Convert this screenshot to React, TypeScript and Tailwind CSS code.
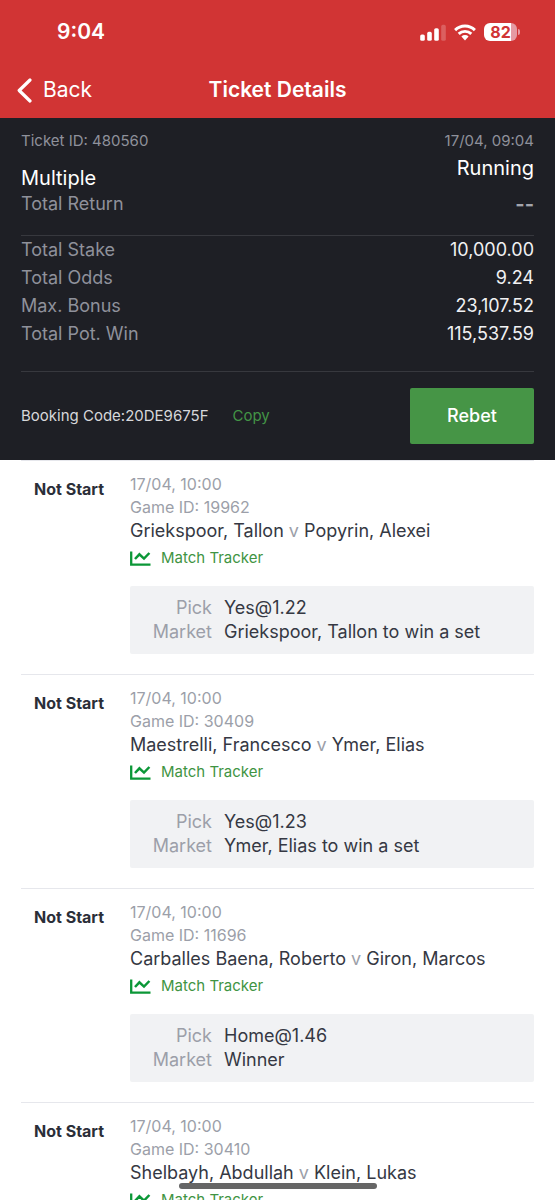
type Game = {
  time: string;
  id: string;
  home: string;
  away: string;
  pick: string;
  market: string;
};

const totals = [
  { label: "Total Stake", value: "10,000.00" },
  { label: "Total Odds", value: "9.24" },
  { label: "Max. Bonus", value: "23,107.52" },
  { label: "Total Pot. Win", value: "115,537.59" },
];

const games: Game[] = [
  { time: "17/04, 10:00", id: "19962", home: "Griekspoor, Tallon", away: "Popyrin, Alexei", pick: "Yes@1.22", market: "Griekspoor, Tallon to win a set" },
  { time: "17/04, 10:00", id: "30409", home: "Maestrelli, Francesco", away: "Ymer, Elias", pick: "Yes@1.23", market: "Ymer, Elias to win a set" },
  { time: "17/04, 10:00", id: "11696", home: "Carballes Baena, Roberto", away: "Giron, Marcos", pick: "Home@1.46", market: "Winner" },
  { time: "17/04, 10:00", id: "30410", home: "Shelbayh, Abdullah", away: "Klein, Lukas", pick: "Yes@1.25", market: "Klein, Lukas to win a set" },
];

function SignalIcon() {
  return (
    <svg width="26" height="17" viewBox="0 0 26 17" fill="#fff" aria-hidden="true">
      <rect x="0.2" y="10.5" width="4.6" height="6.3" rx="1.6" />
      <rect x="7.2" y="7.8" width="4.6" height="9" rx="1.6" />
      <rect x="14.2" y="4.2" width="4.6" height="12.6" rx="1.6" />
      <rect x="21.2" y="0.8" width="4.6" height="16" rx="1.6" opacity="0.22" />
    </svg>
  );
}

function WifiIcon() {
  return (
    <svg width="22" height="17" viewBox="0 0 22 17" aria-hidden="true">
      <g fill="none" stroke="#fff" strokeWidth="2.9">
        <path d="M1.1 6.1a14 14 0 0 1 19.8 0" />
        <path d="M4.7 9.9a9 9 0 0 1 12.6 0" />
      </g>
      <path d="M7.4 12.6a5.1 5.1 0 0 1 7.2 0L11 16.4z" fill="#fff" />
    </svg>
  );
}

function Battery() {
  return (
    <div className="flex items-center gap-px">
      <div className="flex h-[18px] w-[33px] items-center justify-center rounded-md bg-linear-to-r from-white from-82% to-[#e59aa3] to-82% text-[16px] leading-none font-bold text-[#d03434]">
        82
      </div>
      <div className="h-[6px] w-[2px] rounded-r-full bg-[#e59aa3]" />
    </div>
  );
}

function TrackerIcon() {
  return (
    <svg width="21" height="15" viewBox="0 0 21 15" fill="none" stroke="#0b9737" aria-hidden="true">
      <path d="M1.2 0.5v13.2H20.5" strokeWidth="2.3" />
      <path d="M5 8L9.4 3.3L14 7.6L19.4 2" strokeWidth="2.5" />
    </svg>
  );
}

function GameItem({ game }: { game: Game }) {
  return (
    <li className="flex border-t border-[#e6e7ec] pt-3 pb-5">
      <div className="w-[109px] shrink-0 pt-[5px] pl-[13px] text-[16px] leading-[23px] font-bold text-[#2b2e38]">
        Not Start
      </div>
      <div className="min-w-0 flex-1">
        <div className="text-[16px] leading-[23px] text-[#9c9fa9]">{game.time}</div>
        <div className="text-[16px] leading-[23px] text-[#9c9fa9]">Game ID: {game.id}</div>
        <div className="text-[18px] leading-[24px] text-[#353843]">
          {game.home} <span className="text-[#9c9fa9]">v</span> {game.away}
        </div>
        <a href="#tracker" className="mt-[3px] flex w-fit items-center gap-[10px] text-[15px] leading-[24px] text-[#3f9443]">
          <TrackerIcon />
          Match Tracker
        </a>
        <dl className="mt-4 grid grid-cols-[82px_1fr] gap-x-3 rounded-xs bg-[#f1f2f4] py-[10px] text-[18px] leading-[24px]">
          <dt className="text-right text-[#9c9fa9]">Pick</dt>
          <dd className="text-[#353843]">{game.pick}</dd>
          <dt className="text-right text-[#9c9fa9]">Market</dt>
          <dd className="text-[#353843]">{game.market}</dd>
        </dl>
      </div>
    </li>
  );
}

export default function App() {
  return (
    <div className="relative flex h-screen flex-col bg-white font-['Inter',sans-serif]">
      <header className="shrink-0 bg-[#d13434] text-white">
        <div className="flex h-[60px] items-center justify-between pt-1 pr-[35px] pl-[57px]">
          <div className="text-[21px] leading-[28px] font-semibold">9:04</div>
          <div className="flex items-center gap-2">
            <SignalIcon />
            <WifiIcon />
            <Battery />
          </div>
        </div>
        <div className="grid h-[58px] grid-cols-[1fr_auto_1fr] items-center px-[17px] pt-[2px]">
          <button type="button" className="flex items-center gap-[11px] justify-self-start text-[21px] leading-[28px]">
            <svg width="15" height="25" viewBox="0 0 15 25" fill="none" stroke="#fff" strokeWidth="3.2" strokeLinecap="round" strokeLinejoin="round" aria-hidden="true">
              <path d="M13 2L2.2 12.5L13 23" />
            </svg>
            Back
          </button>
          <h1 className="text-[21px] leading-[28px] font-semibold">Ticket Details</h1>
        </div>
      </header>

      <section className="shrink-0 bg-[#1e1f25] px-[21px] pb-4">
        <div className="flex h-[117px] justify-between pt-[12px]">
          <div>
            <div className="text-[15px] leading-[22px] text-[#8f919b]">Ticket ID: 480560</div>
            <div className="mt-[13px] text-[20px] leading-[26px] text-white">Multiple</div>
            <div className="text-[18px] leading-[26px] text-[#8f919b]">Total Return</div>
          </div>
          <div className="text-right">
            <div className="text-[15px] leading-[22px] text-[#8f919b]">17/04, 09:04</div>
            <div className="mt-[3px] text-[20px] leading-[26px] text-white">Running</div>
            <div className="mt-[10px] text-[20px] leading-[26px] font-bold text-[#a3a5ad]">--</div>
          </div>
        </div>
        <dl className="border-t border-[#37383e] pb-[23px] text-[18px] leading-[28px]">
          {totals.map((row) => (
            <div key={row.label} className="flex justify-between">
              <dt className="text-[#8f919b]">{row.label}</dt>
              <dd className="text-[#f1f1f3]">{row.value}</dd>
            </div>
          ))}
        </dl>
        <div className="flex items-center justify-between border-t border-[#37383e] pt-4">
          <div className="flex gap-6 text-[15px] leading-[22px]">
            <span className="text-[#d7d8db]">Booking Code:20DE9675F</span>
            <button type="button" className="text-[#439446]">Copy</button>
          </div>
          <button type="button" className="h-[56px] w-[124px] rounded-xs bg-[#469546] text-[18px] leading-[24px] font-medium text-white">
            Rebet
          </button>
        </div>
      </section>

      <ul className="min-h-0 flex-1 overflow-y-auto px-[21px] [scrollbar-width:none]">
        {games.map((game) => (
          <GameItem key={game.id} game={game} />
        ))}
      </ul>

      <div className="absolute bottom-[11px] left-1/2 h-[6px] w-[198px] -translate-x-1/2 rounded-full bg-[#666]" />
    </div>
  );
}
